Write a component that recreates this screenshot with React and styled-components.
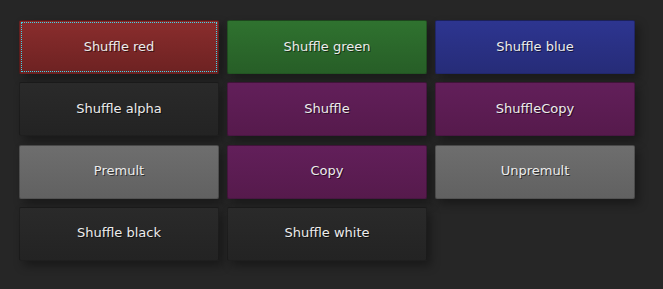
import React from "react";
import styled, { createGlobalStyle } from "styled-components";

const GlobalStyle = createGlobalStyle`
    html, body {
        margin: 0;
        padding: 0;
        background: #262626;
    }
    body {
        font-family: "DejaVu Sans", "Liberation Sans", sans-serif;
    }
`;

const colors = {
    red: ["#8a2d2d", "#6d2222"],
    green: ["#2f722f", "#275e27"],
    blue: ["#2d3590", "#262c78"],
    dark: ["#2a2a2a", "#232323"],
    purple: ["#621f5a", "#561a4c"],
    gray: ["#6e6e6e", "#616161"],
};

const buttons = [
    { label: "Shuffle red", tone: "red", focused: true },
    { label: "Shuffle green", tone: "green" },
    { label: "Shuffle blue", tone: "blue" },
    { label: "Shuffle alpha", tone: "dark" },
    { label: "Shuffle", tone: "purple" },
    { label: "ShuffleCopy", tone: "purple" },
    { label: "Premult", tone: "gray" },
    { label: "Copy", tone: "purple" },
    { label: "Unpremult", tone: "gray" },
    { label: "Shuffle black", tone: "dark" },
    { label: "Shuffle white", tone: "dark" },
];

export default function App() {
    return (
        <>
            <GlobalStyle />
            <Panel>
                <ButtonGrid>
                    {buttons.map((b) => (
                        <NodeButton key={b.label} $tone={b.tone} $focused={b.focused}>
                            {b.label}
                        </NodeButton>
                    ))}
                </ButtonGrid>
            </Panel>
        </>
    );
}

const Panel = styled.div`
    width: 663px;
    height: 289px;
    padding: 20px 0 0 19px;
    box-sizing: border-box;
    background: #262626;
`;
const ButtonGrid = styled.div`
    display: grid;
    grid-template-columns: repeat(3, 200px);
    grid-template-rows: repeat(4, 54px);
    column-gap: 8px;
    row-gap: 8.3px;
`;
const NodeButton = styled.button`
    position: relative;
    margin: 0;
    padding: 0 0 1px;
    border: 1px solid rgba(0, 0, 0, 0.25);
    border-radius: 2px;
    background: linear-gradient(
        to bottom,
        ${(p) => colors[p.$tone][0]},
        ${(p) => colors[p.$tone][1]}
    );
    box-shadow: 4px 5px 10px rgba(0, 0, 0, 0.35);
    color: #ececec;
    font-family: "DejaVu Sans", sans-serif;
    font-size: 13px;
    line-height: 16px;
    text-shadow: 1px 1px 0 rgba(0, 0, 0, 0.55);
    cursor: pointer;
    outline: none;
    &::after {
        content: "";
        display: ${(p) => (p.$focused ? "block" : "none")};
        position: absolute;
        inset: 1px;
        border: 1px dotted #3fd6e8;
    }
`;
